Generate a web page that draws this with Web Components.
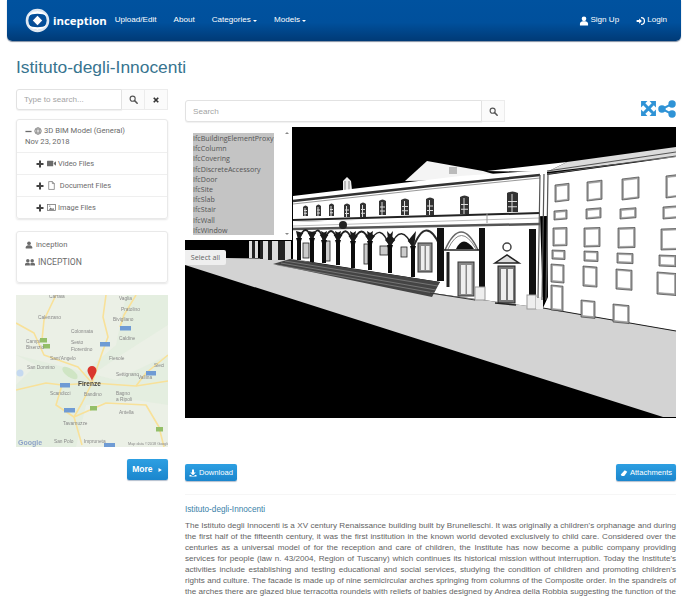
<!DOCTYPE html>
<html>
<head>
<meta charset="utf-8">
<title>Istituto-degli-Innocenti</title>
<style>
html { overflow: hidden; }
body { margin: 0; background: #fff; font-family: "Liberation Sans", sans-serif; }
</style>
</head>
<body>
<app-page></app-page>

<script>
// --------- Icons ------------------------------------------------------------------------

const ICONS = {
    search: '<circle cx="6.5" cy="6.5" r="4.5" fill="none" stroke="currentColor" stroke-width="2"/><path d="M10 10l4.5 4.5" stroke="currentColor" stroke-width="2.6" stroke-linecap="round"/>',
    close: '<path d="M3.5 3.5l9 9M12.500 3.500l-9 9" stroke="currentColor" stroke-width="3.400"/>',
    plus: '<path d="M6 1h4v5h5v4h-5v5H6v-5H1V6h5z" fill="currentColor"/>',
    minus: '<path d="M1 6.500h14v3H1z" fill="currentColor"/>',
    globe: '<circle cx="8" cy="8" r="6.500" fill="none" stroke="currentColor" stroke-width="1.400"/><ellipse cx="8" cy="8" rx="3" ry="6.500" fill="none" stroke="currentColor"/><path d="M1.500 8h13M2.500 4.800h11M2.500 11.200h11" stroke="currentColor"/>',
    video: '<rect x="0" y="3" width="11" height="10" rx="1" fill="currentColor"/><path d="M12 7l4-3v8l-4-3z" fill="currentColor"/>',
    file: '<path d="M3 1h6.500L13 4.500V15H3z M9.500 1v3.500H13" fill="none" stroke="currentColor" stroke-width="1.200"/>',
    image: '<rect x="1" y="2.500" width="14" height="11" fill="none" stroke="currentColor" stroke-width="1.300"/><path d="M3 12l3.500-4 2.500 2.500 2-1.500 2 3z" fill="currentColor"/><circle cx="5" cy="5.500" r="1.200" fill="currentColor"/>',
    user: '<circle cx="8" cy="4.500" r="3.700" fill="currentColor"/><path d="M1.500 15v-2.500c0-2.500 2.500-3.500 4.500-4h4c2 .5 4.500 1.500 4.500 4V15z" fill="currentColor"/>',
    users: '<circle cx="4.500" cy="6" r="2.800" fill="currentColor"/><circle cx="11.500" cy="6" r="2.800" fill="currentColor"/><path d="M0 13.500v-1.800c0-1.500 1.500-2.300 3-2.700h3c1.200.4 1.800 1 1.800 2.700v1.800zM8.500 13.500v-1.800c0-1.700.6-2.300 1.700-2.700h3c1.500.4 2.800 1.200 2.800 2.700v1.800z" fill="currentColor"/>',
    login: '<path d="M8 2.500a5.500 5.500 0 1 1 0 11" fill="none" stroke="currentColor" stroke-width="2"/><path d="M1 6.500h4V3.800L9.500 8 5 12.200V9.500H1z" fill="currentColor"/>',
    download: '<path d="M6 1h4v6h3.500L8 12.500 2.500 7H6z" fill="currentColor"/><path d="M1 12h3l2 2h4l2-2h3v3H1z" fill="currentColor"/>',
    clip: '<path d="M9.500 2.500l5 3-6 8.500H3.500L1.500 11z" fill="currentColor"/>',
    expand: '<path d="M1 1h6L5 3l3 3 3-3-2-2h6v6l-2-2-3 3 3 3 2-2v6H9l2-2-3-3-3 3 2 2H1V9l2 2 3-3-3-3-2 2z" fill="currentColor"/>',
    share: '<circle cx="12.500" cy="3.500" r="3.300" fill="currentColor"/><circle cx="3.500" cy="8" r="3.300" fill="currentColor"/><circle cx="12.500" cy="12.500" r="3.300" fill="currentColor"/><path d="M12.500 3.500L3.500 8l9 4.500" fill="none" stroke="currentColor" stroke-width="1.800"/>',
    next: '<path d="M4 2.500l9 5.500-9 5.500z" fill="currentColor"/>'
};

class IconGlyph extends HTMLElement {
    connectedCallback() {
        const size = this.getAttribute('size') || 9;
        this.attachShadow({ mode: 'open' }).innerHTML = `<style>
:host { display: inline-flex; flex: none; vertical-align: middle; }
svg { display: block; }
</style>
<svg width="${size}" height="${size}" viewBox="0 0 16 16">${ICONS[this.getAttribute('name')]}</svg>`;
    }
}
customElements.define('icon-glyph', IconGlyph);

// --------- Navbar -----------------------------------------------------------------------

class NavLink extends HTMLElement {
    connectedCallback() {
        const caret = this.hasAttribute('caret') ? '<i></i>' : '';
        this.attachShadow({ mode: 'open' }).innerHTML = `<style>
:host { display: inline-flex; align-items: center; gap: 1px; color: #fff; font: 8.100px/1 "Liberation Sans", sans-serif; }
i { width: 0; height: 0; border: 2px solid transparent; border-top-color: #fff; border-bottom: 0; margin-left: 1px; }
</style><slot></slot>${caret}`;
    }
}
customElements.define('nav-link', NavLink);

class AppNavbar extends HTMLElement {
    connectedCallback() {
        this.attachShadow({ mode: 'open' }).innerHTML = `<style>
:host { display: flex; align-items: center; height: 41px; margin: 0 8px 0 7px; padding-left: 17px; padding-right: 14px; box-sizing: border-box;
    background: linear-gradient(#00529f 0%, #00509c 55%, #003a76 100%); border-radius: 0 0 5px 5px; box-shadow: 0 1px 1px rgba(0,30,70,.5); }
.brand { display: flex; align-items: center; gap: 2px; color: #fff; font: 700 11.400px/1 "Open Sans", sans-serif; margin-right: 8px; }
.links { display: flex; gap: 17px; }
.right { display: flex; gap: 17px; margin-left: auto; }
</style>
<div class="brand">
  <svg width="27" height="27" viewBox="0 0 27 27">
    <circle cx="13.500" cy="13.500" r="10.500" fill="none" stroke="#dfe8f2" stroke-width="2.600"/>
    <path d="M4 9c4-6 14-7 19 0-5-3-14-3-19 0zM23 18c-4 6-14 7-19 0 5 3 14 3 19 0z" fill="#fff"/>
    <circle cx="13.500" cy="13.500" r="6" fill="#0b4d96"/>
    <path d="M13.500 8.800l4.700 4.700-4.700 4.700-4.700-4.700z" fill="#fff"/>
  </svg>
  <span>inception</span>
</div>
<div class="links">
  <nav-link>Upload/Edit</nav-link>
  <nav-link>About</nav-link>
  <nav-link caret>Categories</nav-link>
  <nav-link caret>Models</nav-link>
</div>
<div class="right">
  <nav-link><icon-glyph name="user" size="10"></icon-glyph>Sign Up</nav-link>
  <nav-link><icon-glyph name="login" size="10"></icon-glyph>Login</nav-link>
</div>`;
    }
}
customElements.define('app-navbar', AppNavbar);

// --------- Forms and buttons ------------------------------------------------------------

class SearchBox extends HTMLElement {
    connectedCallback() {
        const clear = this.hasAttribute('clear') ? '<button class="x"><icon-glyph name="close" size="8"></icon-glyph></button>' : '';
        this.attachShadow({ mode: 'open' }).innerHTML = `<style>
:host { display: flex; height: 22px; }
input { flex: 1; min-width: 0; box-sizing: border-box; height: 100%; border: 1px solid #e2e2e2; border-radius: 3px 0 0 3px; padding: 0 7px;
    font: 8.100px "Liberation Sans", sans-serif; box-shadow: 0 1px 1px rgba(0,0,0,.06); outline: 0; }
input::placeholder { color: #a4a4a4; opacity: 1; }
button { width: 23px; height: 100%; padding: 0; display: flex; align-items: center; justify-content: center; background: #fbfbfb; border: 1px solid #ececec; border-left: 0; color: #555; }
.x { color: #333; }
</style>
<input placeholder="${this.getAttribute('placeholder')}">
<button><icon-glyph name="search" size="9"></icon-glyph></button>${clear}`;
    }
}
customElements.define('search-box', SearchBox);

class BlueButton extends HTMLElement {
    connectedCallback() {
        this.attachShadow({ mode: 'open' }).innerHTML = `<style>
:host { display: inline-flex; align-items: center; justify-content: center; gap: 2px; box-sizing: border-box; color: #fff; border-radius: 2px;
    background: linear-gradient(#2d9fe2, #1b86cd); box-shadow: 0 1px 1px rgba(0,40,90,.3); font: 7.600px/1 "Liberation Sans", sans-serif; }
</style><slot></slot>`;
    }
}
customElements.define('blue-button', BlueButton);

// --------- Left column ------------------------------------------------------------------

class SidePanel extends HTMLElement {
    connectedCallback() {
        this.attachShadow({ mode: 'open' }).innerHTML = `<style>
:host { display: block; box-sizing: border-box; border: 1px solid #e9e9e9; border-radius: 3px; box-shadow: 0 1px 2px rgba(0,0,0,.1);
    color: #6b6b6b; font: 7.650px/1 Roboto, sans-serif; }
</style><slot></slot>`;
    }
}
customElements.define('side-panel', SidePanel);

class TreeRow extends HTMLElement {
    connectedCallback() {
        this.attachShadow({ mode: 'open' }).innerHTML = `<style>
:host { display: flex; align-items: center; gap: 2px; height: 22px; padding-left: 19px; border-top: 1px solid #efefef; box-sizing: border-box; font-size: 7.400px; }
.plus { color: #444; margin-right: 1px; }
</style>
<icon-glyph class="plus" name="plus" size="8"></icon-glyph>
<icon-glyph name="${this.getAttribute('icon')}" size="9"></icon-glyph><slot></slot>`;
    }
}
customElements.define('tree-row', TreeRow);

class FilePanel extends HTMLElement {
    connectedCallback() {
        this.attachShadow({ mode: 'open' }).innerHTML = `<style>
:host { display: block; }
.head { height: 32px; padding: 6px 0 0 8px; box-sizing: border-box; }
.head div { display: flex; align-items: center; gap: 2px; height: 10px; }
.head div + div { margin-top: 1px; }
</style>
<side-panel>
  <div class="head">
    <div><icon-glyph name="minus" size="7"></icon-glyph><icon-glyph name="globe" size="8"></icon-glyph>3D BIM Model (General)</div>
    <div>Nov 23, 2018</div>
  </div>
  <tree-row icon="video">Video Files</tree-row>
  <tree-row icon="file">&nbsp;Document Files</tree-row>
  <tree-row icon="image">Image Files</tree-row>
</side-panel>`;
    }
}
customElements.define('file-panel', FilePanel);

class OwnerPanel extends HTMLElement {
    connectedCallback() {
        this.attachShadow({ mode: 'open' }).innerHTML = `<style>
:host { display: block; }
.in { height: 50px; padding: 8px 0 0 8px; box-sizing: border-box; }
.in div { display: flex; align-items: center; gap: 3px; height: 10px; margin-bottom: 7px; }
.org { font-size: 8.600px; }
</style>
<side-panel><div class="in">
  <div><icon-glyph name="user" size="8"></icon-glyph>inception</div>
  <div class="org"><icon-glyph name="users" size="10"></icon-glyph>INCEPTION</div>
</div></side-panel>`;
    }
}
customElements.define('owner-panel', OwnerPanel);

class MapCard extends HTMLElement {
    connectedCallback() {
        const labels = [
            [33, 3, 'Carraia'], [103, 5, 'Vaglia'], [105, 16, 'Pratolino'], [22, 24, 'Calenzano'],
            [97, 26, 'Bivigliano'], [55, 38, 'Colonnata'], [55, 49, 'Sesto'], [55, 56, 'Fiorentino'],
            [103, 45, 'Caldine'], [10, 48, 'Campi'], [10, 54, 'Bisenzio'], [34, 65, 'Sant\'Angelo'],
            [93, 65, 'Fiesole'], [11, 74, 'San Donnino'], [100, 81, 'Settignano'], [122, 84, 'Vallina'],
            [138, 72, 'Sieci'], [34, 100, 'Scandicci'], [68, 101, 'Bandino'], [100, 100, 'Bagno'],
            [100, 106, 'a Ripoli'], [103, 119, 'Antella'], [47, 130, 'Tavarnuzze'], [38, 148, 'San Polo'],
            [68, 148, 'Impruneta']
        ].map(([x, y, t]) => `<text x="${x}" y="${y}">${t}</text>`).join('');
        const shields = [[104, 31, 11, '#6f9bd4'], [84, 47, 10, '#6f9bd4'], [44, 88, 10, '#6f9bd4'], [48, 113, 11, '#6f9bd4'],
            [130, 76, 10, '#6f9bd4'], [88, 148, 11, '#6f9bd4'], [24, 43, 7, '#94bf68'], [27, 49, 7, '#94bf68'], [74, 111, 7, '#94bf68'], [140, 132, 7, '#94bf68']]
            .map(([x, y, w, c]) => `<rect x="${x}" y="${y}" width="${w}" height="4.500" fill="${c}"/>`).join('');
        this.attachShadow({ mode: 'open' }).innerHTML = `<style>
:host { display: block; height: 152px; overflow: hidden; }
svg { display: block; filter: blur(.35px); }
text { font: 4.800px "Liberation Sans", sans-serif; fill: #888; }
.city { font: 700 6.500px "Liberation Sans", sans-serif; fill: #444; }
.google { font: 700 7px "Liberation Sans", sans-serif; fill: #8ea3c9; }
</style>
<svg width="152" height="152" viewBox="0 0 152 152">
  <rect width="152" height="152" fill="#ebf0e6"/>
  <path d="M0 60L40 80 70 84 105 60 152 30V0H110L100 50 60 84 20 70 0 90V152H60L70 110 120 105 152 110V60L100 85z" fill="#e1ecdd" opacity=".7"/>
  <ellipse cx="54" cy="78" rx="9" ry="4" fill="#cfe5c4" transform="rotate(35 54 78)"/>
  <circle cx="4" cy="78" r="3.500" fill="#c5d9f0"/>
  <g fill="none" stroke="#f8e199" stroke-width="1.600" stroke-linejoin="round">
    <path d="M0 28L18 38 28 60 62 72 76 88 46 90 40 110 58 122 66 150"/>
    <path d="M40 0L28 25 26 45"/>
    <path d="M90 0L87 22 92 42 86 58 76 88 120 91 152 86"/>
    <path d="M120 0L108 20 104 32"/>
    <path d="M76 88L66 108 58 122 90 108 130 110 143 132 148 152"/>
    <path d="M152 60L130 78 120 91"/>
    <path d="M0 95L30 88 46 90"/>
  </g>
  ${shields}
  ${labels}
  <text class="city" x="62" y="91">Firenze</text>
  <text class="google" x="2" y="150">Google</text>
  <text x="112" y="150" style="font-size:3.800px">Map data ©2018 Google</text>
  <path d="M76 86c-1-4-4.500-7-4.500-10.500a4.500 4.500 0 0 1 9 0C80.500 79 77 82 76 86z" fill="#d9362e"/>
</svg>`;
    }
}
customElements.define('map-card', MapCard);

// --------- Viewer -----------------------------------------------------------------------

class BimViewer extends HTMLElement {
    connectedCallback() {
        const items = ['IfcBuildingElementProxy', 'IfcColumn', 'IfcCovering', 'IfcDiscreteAccessory', 'IfcDoor', 'IfcSite', 'IfcSlab', 'IfcStair', 'IfcWall', 'IfcWindow'];
        this.attachShadow({ mode: 'open' }).innerHTML = `<style>
:host { display: block; position: relative; height: 291px; background: #000; overflow: hidden; }
svg { display: block; filter: blur(.3px); }
.panel { position: absolute; left: 0; top: 0; width: 107px; height: 113px; background: #fff; box-sizing: border-box; padding: 6px 0 0 8px; }
.list { width: 81px; height: 102px; background: #c4c4c4; color: #555; font: 7.100px/10.200px "Open Sans", sans-serif; white-space: nowrap; overflow: hidden; }
.arrow { position: absolute; right: 3px; width: 0; height: 0; border: 2px solid transparent; }
.up { top: 5px; border-bottom-color: #888; border-top: 0; }
.down { bottom: 5px; border-top-color: #888; border-bottom: 0; }
.all { position: absolute; left: 0; top: 123px; width: 41px; height: 15px; background: #efefef; color: #666; font: 7.200px/15px "Open Sans", sans-serif; text-align: center; border-radius: 0 2px 2px 0; }
</style>
${this.scene()}
<div class="panel">
  <div class="list">${items.map(i => `<div>${i}</div>`).join('')}</div>
  <span class="arrow up"></span><span class="arrow down"></span>
</div>
<div class="all">Select all</div>`;
    }

    scene() {
        // upper loggia windows
        const upper = [[303, 205, 5, 11], [316, 204, 5, 12], [329, 203, 5, 13], [344, 203, 6, 14], [360, 202, 6, 15], [379, 199, 7, 16], [401, 198, 8, 17], [426, 197, 8, 18], [460, 195, 9, 19], [507, 191, 11, 21]]
            .map(([x, y, w, h]) => `<path d="M${x} ${y + h}V${y + 2}q${w / 2} -3 ${w} 0V${y + h}z" fill="#333"/><path d="M${x + w / 2 - .5} ${y + 3}v${h - 3}M${x + 1} ${y + h * .5}h${w - 2}M${x + 1} ${y + h * .75}h${w - 2}" stroke="#ddd" stroke-width="1"/>`).join('');
        // arcade columns, [x, top, bottom]
        const cols = [[299, 240, 260], [312, 240, 262], [324, 242, 263], [338, 242, 265], [353, 243, 268], [370, 243, 270], [390, 247, 273], [413, 248, 277]];
        const spandrel = cols.slice(0, -1).map((c, i) => {
            const d = cols[i + 1];
            const mid = (c[0] + d[0]) / 2;
            // only the haunches of each arch are dark, the crown stays open
            const stop = 3 + (d[0] - c[0]) * .1;
            return `<path d="M${c[0]} ${c[1]}Q${mid} 220 ${d[0]} ${d[1]}" fill="none" stroke="#222" stroke-width="${i < 5 ? 1.800 : 1.400}"/>
<path d="M${c[0] - 1} ${c[1]}L${c[0] + stop} ${c[1] - 7}L${c[0] - 3} 231z M${d[0] + 1} ${d[1]}L${d[0] - stop} ${d[1] - 7}L${d[0] + 3} 231z" fill="#1a1a1a"/>`;
        }).join('') + `<path d="M413 248Q426 214 440 246" fill="none" stroke="#2a2a2a" stroke-width="2"/>`;
        const columns = cols.map(([x, t, b]) => `<path d="M${x - 3} ${t - 2}h6l-1 3v${b - t - 1}h-4v${-(b - t - 1)}z" fill="#0c0c0c"/>`).join('');
        // right wall windows, as read off the reference
        const rows = [
            [-.12, [[555, 185, 14, 17], [587, 182, 15, 19], [622, 179, 17, 21], [666, 176, 14, 22]]],
            [-.08, [[554, 211, 13, 9], [586, 209, 15, 10], [620, 209, 16, 10], [663, 207, 17, 12]]],
            [-.03, [[553, 228, 14, 18], [584, 228, 16, 19], [618, 228, 17, 20], [661, 229, 17, 21]]],
            [.04, [[552, 250, 13, 9], [584, 251, 14, 10], [617, 253, 16, 10], [659, 255, 17, 11]]],
            [.08, [[551, 264, 13, 18], [583, 266, 14, 20], [616, 269, 16, 20], [657, 272, 19, 22]]],
            [.1, [[551, 285, 12, 25], [581, 300, 14, 17], [613, 304, 16, 18]]]
        ];
        const windows = rows.map(([s, list]) => list.map(([x, y, w, h]) => {
            const q = (a, b, c, e) => `${a},${b} ${a + c},${b + c * s} ${a + c},${b + c * s + e} ${a},${b + e}`;
            return `<polygon points="${q(x, y, w, h)}" fill="#a2a2a2" stroke="#444" stroke-width=".7"/><polygon points="${q(x + 1.500, y + 1.500, w - 3, h - 3)}" fill="#fff" stroke="#777" stroke-width=".4"/>`;
        }).join('')).join('');

        return `<svg width="491" height="291" viewBox="185 127 491 291">
  <rect x="185" y="127" width="491" height="291" fill="#000"/>
  <!-- back block and roofs -->
  <polygon points="405,181 427,161 483,171 500,176 460,180" fill="#f4f4f4"/>
  <rect x="449" y="167" width="8" height="7" fill="#bbb"/>
  <polygon points="487,171 567,162 547,172" fill="#fff"/>
  <polygon points="547,172 567,162 676,147 676,157" fill="#dcdcdc"/>
  <polygon points="347,177 351,181 352,190 343,191 343,181" fill="#eee"/><path d="M345 181v9M349 181v9" stroke="#888"/>
  <!-- ground -->
  <polygon points="185,262 225,258 297,259 430,293 543,308 676,331 676,417 663,417 185,265" fill="#d3d3d3"/>
  <!-- background columns left of the loggia -->
  <path d="M249 241h3v17h-3zM255 241h3v17h-3zM263 241h5v18h-5zM272 241h6v19h-6zM285 241h6v19h-6z" fill="#ddd"/>
  <path d="M252 241h3v17h-3zM260 241h3v18h-3zM268 241h4v19h-4zM278 241h7v19h-7z" fill="#222"/>
  <!-- loggia upper wall, arcade wall -->
  <polygon points="293,196 460,176 547,170 547,216 293,222" fill="#fff"/>
  <path d="M293 201L430 186 540 175" stroke="#333" stroke-width="2.500" fill="none"/>
  <path d="M293 204L430 189 540 178" stroke="#999" stroke-width="1" fill="none"/>
  <polygon points="293,222 540,214 543,308 432,293 440,282 293,259" fill="#fff"/>
  ${upper}
  <path d="M293 220L540 213" stroke="#222" stroke-width="2"/>
  <path d="M293 226L540 218" stroke="#bbb" stroke-width="1"/>
  <path d="M293 229L540 224" stroke="#555" stroke-width="2.500"/>
  <path d="M487 213v10" stroke="#999"/>
  <!-- arcade -->
  <g fill="#ccc" stroke="#222" stroke-width=".8">
    <rect x="303" y="243" width="6" height="15"/><rect x="325" y="241" width="5" height="20"/><rect x="364" y="244" width="4" height="20"/>
    <rect x="380" y="246" width="8" height="9"/><rect x="401" y="247" width="6" height="10"/>
  </g>
  ${spandrel}
  ${columns}
  <circle cx="343" cy="225" r="4" fill="#222"/>
  <rect x="418" y="243" width="14" height="29" fill="#888" stroke="#333"/><rect x="421" y="246" width="3.500" height="24" fill="#eee"/><rect x="426" y="246" width="3.500" height="24" fill="#eee"/>
  <!-- stairs -->
  <polygon points="273,264 290,259 440,282 432,297" fill="#444"/>
  <path d="M281 263L436 290M285 261L438 286M277 265L434 293" stroke="#8a8a8a" stroke-width=".7"/>
  <!-- end bay and door -->
  <rect x="437" y="228" width="7" height="53" fill="#111"/>
  <rect x="479" y="228" width="6" height="60" fill="#111"/>
  <path d="M445 250Q461 214 478 250" fill="none" stroke="#666" stroke-width="1.500"/>
  <path d="M448 249Q461 222 476 249" fill="none" stroke="#888" stroke-width="1"/>
  <path d="M456 249Q463 234 474 249z" fill="#111"/>
  <path d="M443 250h36" stroke="#222" stroke-width="1.500"/>
  <path d="M448 252v35" stroke="#222" stroke-width="3"/>
  <rect x="458" y="262" width="16" height="34" fill="#888" stroke="#333"/><rect x="461" y="265" width="4.500" height="29" fill="#eee"/><rect x="467" y="265" width="4.500" height="29" fill="#eee"/>
  <rect x="475" y="287" width="10" height="13" fill="#eee" stroke="#999"/>
  <circle cx="507" cy="247" r="4" fill="#fff" stroke="#444" stroke-width="1.500"/>
  <path d="M495 263L507 255 519 263z" fill="#ddd" stroke="#222" stroke-width="1.500"/>
  <rect x="498" y="266" width="17" height="37" fill="#777" stroke="#222"/><rect x="501" y="269" width="5" height="31" fill="#eee"/><rect x="508" y="269" width="5" height="31" fill="#eee"/>
  <path d="M495 303L516 305" stroke="#222" stroke-width="1.500"/>
  <rect x="529" y="229" width="7" height="66" fill="#111"/><rect x="527" y="295" width="9" height="14" fill="#eee" stroke="#999"/>
  <rect x="536" y="297" width="7" height="12" fill="#eee"/>
  <!-- right wall -->
  <polygon points="547,175 676,157 676,331 543,308 548,297" fill="#fff"/>
  <path d="M540 175L538 298M544 174L542 300M548 173L546 300" stroke="#555" stroke-width="1.200"/>
  <path d="M547 174L676 156M547 171L676 152" stroke="#555" stroke-width="1.200"/>
  <path d="M543 308L676 331" stroke="#222" stroke-width="1"/>
  <path d="M430 293L475 300" stroke="#333"/>
  ${windows}
</svg>`;
    }
}
customElements.define('bim-viewer', BimViewer);

// --------- Description ------------------------------------------------------------------

class ProjectNotes extends HTMLElement {
    connectedCallback() {
        this.attachShadow({ mode: 'open' }).innerHTML = `<style>
:host { display: block; }
h3 { margin: 0 0 5px; color: #3a7fa8; font: 400 8.200px/11px "Liberation Sans", sans-serif; }
p { margin: 0; color: #636363; font: 8.100px/11px "Liberation Sans", sans-serif; text-align: justify; }
</style>
<h3><slot name="title"></slot></h3>
<p><slot></slot></p>`;
    }
}
customElements.define('project-notes', ProjectNotes);

// --------- Page -------------------------------------------------------------------------

class AppPage extends HTMLElement {
    connectedCallback() {
        this.attachShadow({ mode: 'open' }).innerHTML = `<style>
:host { display: block; }
h1 { margin: 16px 0 11px 16px; color: #37748f; font: 400 17.400px/21px "Liberation Sans", sans-serif; }
.cols { display: grid; grid-template-columns: 152px 491px; column-gap: 17px; padding-left: 16px; }
.left { display: flex; flex-direction: column; }
.left search-box { height: 21px; margin-bottom: 9px; }
owner-panel { margin-top: 12px; }
map-card { margin-top: 12px; }
.more { align-self: flex-end; width: 41px; height: 21px; margin-top: 12px; font-size: 8.500px; font-weight: 700; }
.right { padding-top: 11px; }
.tools { display: flex; align-items: flex-start; height: 27px; }
.tools search-box { width: 320px; }
.tools .ic { margin-left: auto; display: flex; gap: 1px; color: #2f93d6; }
.actions { display: flex; justify-content: space-between; margin-top: 46px; padding-bottom: 13px; border-bottom: 1px solid #f6f6f6; }
.actions blue-button { height: 17px; }
.dl { width: 52px; } .at { width: 60px; }
project-notes { margin-top: 9px; }
</style>
<app-navbar></app-navbar>
<h1>Istituto-degli-Innocenti</h1>
<div class="cols">
  <div class="left">
    <search-box placeholder="Type to search..." clear></search-box>
    <file-panel></file-panel>
    <owner-panel></owner-panel>
    <map-card></map-card>
    <blue-button class="more">More&nbsp;<icon-glyph name="next" size="6"></icon-glyph></blue-button>
  </div>
  <div class="right">
    <div class="tools">
      <search-box placeholder="Search"></search-box>
      <span class="ic"><icon-glyph name="expand" size="17"></icon-glyph><icon-glyph name="share" size="18"></icon-glyph></span>
    </div>
    <bim-viewer></bim-viewer>
    <div class="actions">
      <blue-button class="dl"><icon-glyph name="download" size="8"></icon-glyph>Download</blue-button>
      <blue-button class="at"><icon-glyph name="clip" size="8"></icon-glyph>Attachments</blue-button>
    </div>
    <project-notes>
      <span slot="title">Istituto-degli-Innocenti</span>
      The Istituto degli Innocenti is a XV century Renaissance building built by Brunelleschi. It was originally a children's orphanage and during the first half of the fifteenth century, it was the first institution in the known world devoted exclusively to child care. Considered over the centuries as a universal model of for the reception and care of children, the Institute has now become a public company providing services for people (law n. 43/2004, Region of Tuscany) which continues its historical mission without interruption. Today the Institute's activities include establishing and testing educational and social services, studying the condition of children and promoting children's rights and culture. The facade is made up of nine semicircular arches springing from columns of the Composite order. In the spandrels of the arches there are glazed blue terracotta roundels with reliefs of babies designed by Andrea della Robbia suggesting the function of the hall.
    </project-notes>
  </div>
</div>`;
    }
}
customElements.define('app-page', AppPage);
</script>
</body>
</html>
